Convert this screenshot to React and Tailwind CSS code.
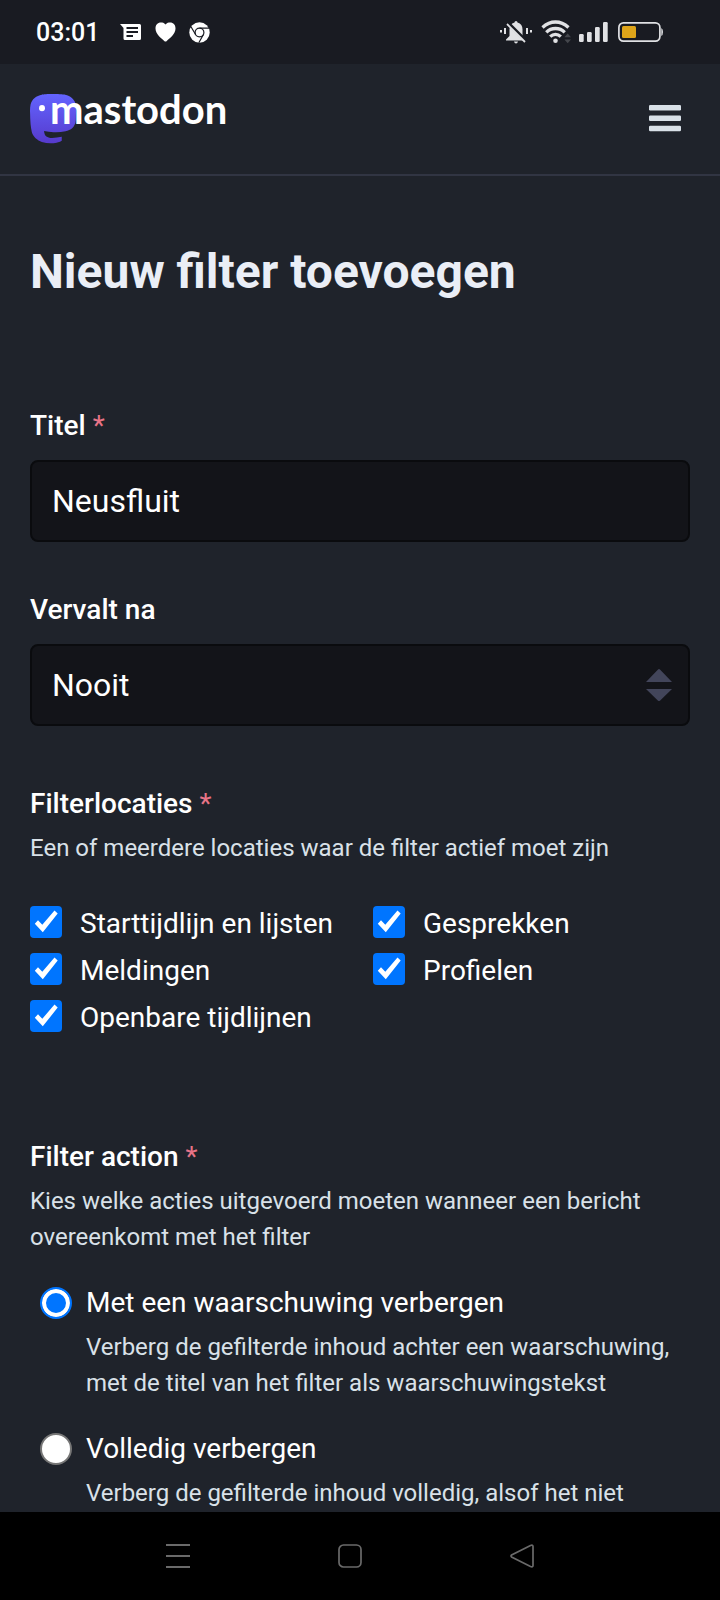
import { useState } from 'react';

const LOCATIONS = [
  { id: 'home', label: 'Starttijdlijn en lijsten' },
  { id: 'notifications', label: 'Meldingen' },
  { id: 'public', label: 'Openbare tijdlijnen' },
  { id: 'thread', label: 'Gesprekken' },
  { id: 'account', label: 'Profielen' },
];

const ACTIONS = [
  {
    id: 'warn',
    label: 'Met een waarschuwing verbergen',
    hint: 'Verberg de gefilterde inhoud achter een waarschuwing, met de titel van het filter als waarschuwingstekst',
  },
  {
    id: 'hide',
    label: 'Volledig verbergen',
    hint: 'Verberg de gefilterde inhoud volledig, alsof het niet',
  },
];

function StatusBar() {
  return (
    <div className="flex h-16 shrink-0 items-center justify-between bg-[#191b22] pl-9 pr-14 text-white">
      <div className="flex items-center">
        <span className="w-[84px] pt-[2px] text-[25px] font-medium leading-8">03:01</span>

        {/* Messages */}
        <svg className="mr-3 h-5 w-[22px]" viewBox="0 0 22 20" fill="none">
          <path d="M0 2H19.5Q21 2 21 3.500V16.500Q21 18 19.500 18H5Q3.500 18 3.500 16.500V6Z" fill="#fff" />
          <path d="M6.500 6H18M6.500 10H18M6.500 14H13" stroke="#191b22" strokeWidth="1.800" />
        </svg>

        {/* Heart */}
        <svg className="mr-3 h-5 w-[23px]" viewBox="0 0 23 20" fill="#fff">
          <path d="M11.500 2.500C13 .8 14.500.5 16 .5C19.500.5 21.500 3 21.500 6.500C21.500 12 15.500 16.500 12.500 19.200Q11.500 20 10.500 19.200C7.500 16.500 1.500 12 1.500 6.500C1.500 3 3.500.5 7 .5C8.500.5 10 .8 11.500 2.500Z" />
        </svg>

        {/* Chrome */}
        <svg className="size-[21px]" viewBox="0 0 21 21" fill="none">
          <circle cx="10.500" cy="10.500" r="10.200" fill="#fff" />
          <g stroke="#191b22" strokeWidth="1.200">
            <circle cx="10.500" cy="10.500" r="4.400" />
            <path d="M10.500 6.100H20M6.700 12.700L2 4.800M14.300 12.700L9.800 20.700" />
          </g>
        </svg>
      </div>

      <div className="flex items-center">
        {/* Muted, vibrating bell */}
        <svg className="mr-2 h-6 w-[33px]" viewBox="0 0 33 24" fill="#e0e1e4">
          <path d="M14.500 2.500Q14.500 1 16 1T17.500 2.500C21 3.500 22.500 6 22.500 9.500V16L25.500 19.500V20.500H6V19.500L9.500 16V9.500C9.500 6 11 3.500 14.500 2.500Z" />
          <path d="M14 21.500H18Q17.500 23.500 16 23.500T14 21.500Z" />
          <path d="M4 8H6V14H4ZM0 10H2V12.500H0ZM26 8H28V14H26ZM30 10H32V12.500H30Z" />
          <path d="M7.500 2.500L26.500 21.500" stroke="#191b22" strokeWidth="3.500" />
          <path d="M7 4L25 22" stroke="#e0e1e4" strokeWidth="1.800" />
        </svg>

        {/* Wi-Fi */}
        <svg className="mr-2 h-6 w-[30px]" viewBox="0 0 30 24" fill="none">
          <g stroke="#e0e1e4" strokeWidth="3.300">
            <path d="M1.500 7.500Q7.500 2 14.500 2T27.500 7.500" />
            <path d="M5.300 12.300Q9 8.500 14.500 8.500T23.700 12.300" />
            <path d="M9.200 16.600Q11.500 14.400 14.500 14.400T19.800 16.600" />
          </g>
          <circle cx="14.500" cy="20.700" r="2.300" fill="#e0e1e4" />
          <path d="M23.400 17.200L26.700 13.500L30 17.200ZM23.400 19.500L26.700 23.200L30 19.500Z" fill="#44464c" />
        </svg>

        {/* Signal strength */}
        <svg className="mr-[10px] h-5 w-[29px]" viewBox="0 0 29 20" fill="#e0e1e4">
          <rect x="0" y="12" width="4.700" height="8" rx="1.200" />
          <rect x="8" y="10" width="4.700" height="10" rx="1.200" />
          <rect x="16" y="5" width="4.700" height="15" rx="1.200" />
          <rect x="24" y="0" width="4.700" height="20" rx="1.200" />
        </svg>

        {/* Battery */}
        <svg className="h-5 w-[46px]" viewBox="0 0 46 20" fill="none">
          <rect x=".9" y=".9" width="41" height="18.200" rx="4.500" stroke="#e0e1e4" strokeWidth="1.700" />
          <rect x="4" y="4" width="14" height="12" rx="1.500" fill="#dfa51a" />
          <path d="M43.300 6Q45 7 45 10T43.300 14Z" fill="#e0e1e4" />
        </svg>
      </div>
    </div>
  );
}

function Logo() {
  return (
    <a href="#" className="flex h-[50px] items-start" aria-label="mastodon">
      <svg className="h-[50px] w-[46px] shrink-0" viewBox="4 0 71 76" preserveAspectRatio="none">
        <defs>
          <linearGradient id="logo-body" x1="0" y1="0" x2="0" y2="1">
            <stop offset="0" stopColor="#6364ff" />
            <stop offset="1" stopColor="#563acc" />
          </linearGradient>
        </defs>
        <path
          fill="url(#logo-body)"
          d="M74.7 16.6C73.6 8.500 66.500 2.200 58.100 1C56.700.8 51.400 0 38.900 0H38.800C26.400 0 23.700.8 22.300 1C14.100 2.200 6.700 7.900 4.900 16C4 20 3.900 24.500 4.100 28.600C4.300 34.400 4.300 40.300 4.900 46.100C5.200 50 5.900 53.800 6.800 57.600C8.500 64.600 15.500 70.400 22.300 72.800C29.600 75.300 37.500 75.700 45 74C45.800 73.800 46.600 73.600 47.400 73.300C49.300 72.700 51.400 72.100 53 71V65C48 66.100 43.100 66.700 38.100 66.700C29.600 66.700 27.300 62.700 26.700 61C26.100 59.600 25.800 58.100 25.700 56.400C30.600 57.500 35.500 58.100 40.300 58.100C41.500 58.100 42.700 58.100 43.900 58C48.800 57.900 53.900 57.700 58.800 56.700C66.700 55.200 74 50.700 74.700 39.200C74.700 38.700 74.800 34.400 74.800 33.900C74.800 32.300 75.300 22.600 74.700 16.600Z"
        />
        <circle cx="22.500" cy="21.500" r="4.600" fill="#fff" />
      </svg>
      <span className="-ml-7 pl-[2px] font-[Lato,sans-serif] text-[40px] font-bold leading-[30px] text-white">
        mastodon
      </span>
    </a>
  );
}

function Header() {
  return (
    <header className="flex shrink-0 items-center justify-between border-b-2 border-[#313543] px-[30px] py-[30px]">
      <Logo />
      <button type="button" aria-label="Menu" className="px-2 py-2">
        <svg className="h-7 w-[34px]" viewBox="0 0 34 28" fill="#d9e1e8">
          <rect x="1" y="0" width="32" height="5.500" rx="1.200" />
          <rect x="1" y="10.400" width="32" height="5.500" rx="1.200" />
          <rect x="1" y="20.700" width="32" height="5.500" rx="1.200" />
        </svg>
      </button>
    </header>
  );
}

function Required() {
  return <abbr title="vereist" className="font-normal text-[#e87487] no-underline">*</abbr>;
}

function NavigationBar() {
  return (
    <nav className="flex h-[88px] shrink-0 items-center justify-center gap-[148px] bg-black pr-5">
      <button type="button" aria-label="Recent">
        <svg className="size-6" viewBox="0 0 24 24" fill="none" stroke="#6a6a6a" strokeWidth="1.800">
          <path d="M0 1H24M0 12H24M0 23H24" />
        </svg>
      </button>
      <button type="button" aria-label="Home">
        <svg className="size-6" viewBox="0 0 24 24" fill="none" stroke="#6a6a6a" strokeWidth="1.700">
          <rect x="1" y="1" width="22" height="22" rx="4.500" />
        </svg>
      </button>
      <button type="button" aria-label="Terug">
        <svg className="size-6" viewBox="0 0 24 24" fill="none" stroke="#6a6a6a" strokeWidth="1.700">
          <path d="M1.600 11Q.4 12 1.600 13L20.500 22.500Q23 23.500 23 21.500V2.500Q23 .5 20.500 1.500Z" />
        </svg>
      </button>
    </nav>
  );
}

function App() {
  const [title, setTitle] = useState('Neusfluit');
  const [expires, setExpires] = useState('never');
  const [locations, setLocations] = useState(LOCATIONS.map((location) => location.id));
  const [action, setAction] = useState('warn');

  const toggleLocation = (id) => {
    setLocations((current) =>
      current.includes(id) ? current.filter((item) => item !== id) : [...current, id]
    );
  };

  return (
    <div className="flex h-screen flex-col bg-[#1f232b] font-[Roboto,sans-serif] text-white">
      <StatusBar />
      <Header />

      <main className="min-h-0 flex-1 overflow-y-auto px-[30px] pt-[66px] [scrollbar-width:none]">
        <h1 className="text-5xl font-bold leading-[60px] text-[#eaeef6]">Nieuw filter toevoegen</h1>

        <form className="mt-[104px]">
          <div>
            <label htmlFor="title" className="block text-[28px] font-medium leading-10">
              Titel <Required />
            </label>
            <input
              id="title"
              type="text"
              value={title}
              onChange={(e) => setTitle(e.target.value)}
              className="mt-[14px] block h-[82px] w-full rounded-lg border-2 border-[#0a0b0e] bg-[#131419] px-5 text-[32px] outline-none"
            />
          </div>

          <div className="mt-12">
            <label htmlFor="expires" className="block text-[28px] font-medium leading-10">
              Vervalt na
            </label>
            <div className="relative mt-[14px]">
              <select
                id="expires"
                value={expires}
                onChange={(e) => setExpires(e.target.value)}
                className="block h-[82px] w-full appearance-none rounded-lg border-2 border-[#0a0b0e] bg-[#131419] px-5 text-[32px] outline-none"
              >
                <option value="never">Nooit</option>
              </select>
              <svg
                className="pointer-events-none absolute right-[18px] top-1/2 h-8 w-[26px] -translate-y-1/2"
                viewBox="0 0 26 32"
                fill="#42455a"
              >
                <path d="M0 13L11.800.7Q13-.5 14.200.7L26 13ZM0 20L11.800 31.500Q13 32.700 14.200 31.500L26 20Z" />
              </svg>
            </div>
          </div>

          <fieldset className="mt-[58px]">
            <legend className="text-[28px] font-medium leading-10">
              Filterlocaties <Required />
            </legend>
            <p className="mt-[6px] text-2xl leading-9 text-[#d9e1e8]">
              Een of meerdere locaties waar de filter actief moet zijn
            </p>
            <div className="mt-10 grid grid-flow-col grid-cols-2 grid-rows-3 gap-x-[26px]">
              {LOCATIONS.map((location) => (
                <label key={location.id} className="flex items-start gap-[18px] pb-[11px] text-[28px] leading-9">
                  <span className="relative size-8 shrink-0">
                    <input
                      type="checkbox"
                      checked={locations.includes(location.id)}
                      onChange={() => toggleLocation(location.id)}
                      className="peer block size-8 appearance-none rounded-[4px] bg-white checked:bg-[#0075ff]"
                    />
                    <svg
                      className="pointer-events-none absolute inset-0 hidden size-8 peer-checked:block"
                      viewBox="0 0 32 32"
                      fill="#fff"
                    >
                      <path d="M4.800 17.800L8 14.200L12.300 18.800L24.500 4.500L27.700 7.600L12.800 26.300Z" />
                    </svg>
                  </span>
                  {location.label}
                </label>
              ))}
            </div>
          </fieldset>

          <fieldset className="mt-[90px]">
            <legend className="text-[28px] font-medium leading-10">
              Filter action <Required />
            </legend>
            <p className="mt-[6px] text-2xl leading-9 text-[#d9e1e8]">
              Kies welke acties uitgevoerd moeten wanneer een bericht overeenkomt met het filter
            </p>
            {ACTIONS.map((item) => (
              <div key={item.id} className="mt-[29px] pl-[10px]">
                <label className="flex items-center gap-[14px] text-[28px] leading-[38px]">
                  <input
                    type="radio"
                    name="action"
                    value={item.id}
                    checked={action === item.id}
                    onChange={() => setAction(item.id)}
                    className="size-8 shrink-0 appearance-none rounded-full border-2 border-[#767676] bg-white checked:border-[#0075ff] checked:bg-[#0075ff] checked:shadow-[inset_0_0_0_4px_#fff]"
                  />
                  {item.label}
                </label>
                <p className="mt-[7px] pl-[46px] text-2xl leading-9 text-[#d9e1e8]">{item.hint}</p>
              </div>
            ))}
          </fieldset>
        </form>
      </main>

      <NavigationBar />
    </div>
  );
}

export default App;
